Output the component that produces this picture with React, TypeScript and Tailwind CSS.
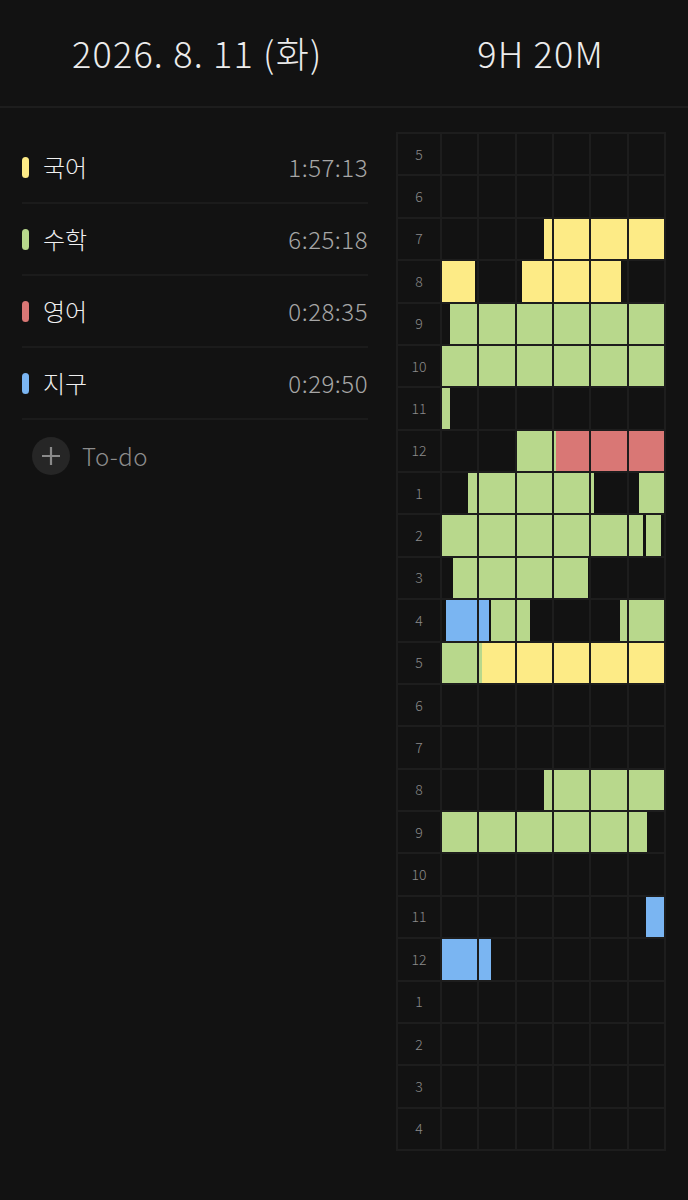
import React from 'react';

const Y = '#fdeb86';
const G = '#b8d88c';
const R = '#d97775';
const B = '#7ab5f2';

type Seg = [number, number, string];

const subjects = [
  { name: '국어', color: Y, time: '1:57:13' },
  { name: '수학', color: G, time: '6:25:18' },
  { name: '영어', color: R, time: '0:28:35' },
  { name: '지구', color: B, time: '0:29:50' },
];

const hours = [5, 6, 7, 8, 9, 10, 11, 12, 1, 2, 3, 4, 5, 6, 7, 8, 9, 10, 11, 12, 1, 2, 3, 4];

// minutes within each hour row
const rows: Seg[][] = [
  [],
  [],
  [[27.6, 60, Y]],
  [[0, 9.4, Y], [21.6, 48.5, Y]],
  [[2.2, 60, G]],
  [[0, 60, G]],
  [[0, 2.2, G]],
  [[20, 30.5, G], [30.5, 60, R]],
  [[7.3, 40.9, G], [52.9, 60, G]],
  [[0, 54.2, G], [55, 59.1, G]],
  [[3.2, 39.5, G]],
  [[1.1, 12.6, B], [13.3, 23.9, G], [48, 60, G]],
  [[0, 10.8, G], [10.8, 60, Y]],
  [],
  [],
  [[27.6, 60, G]],
  [[0, 55.2, G]],
  [],
  [[55, 60, B]],
  [[0, 13.3, B]],
  [],
  [],
  [],
  [],
];

const Cell = ({ segs, col }: { segs: Seg[]; col: number }) => {
  const from = col * 10;
  const to = from + 10;
  return (
    <div className="relative flex-1 border-l-2 border-[#1d1d1d]">
      {segs
        .filter(([a, b]) => b > from && a < to)
        .map(([a, b, c], i) => {
          const s = Math.max(a, from) - from;
          const e = Math.min(b, to) - from;
          return (
            <div
              key={i}
              className="absolute top-0 bottom-0"
              style={{ left: `${s * 10}%`, width: `${(e - s) * 10}%`, background: c }}
            />
          );
        })}
    </div>
  );
};

export default function App() {
  return (
    <div className="w-[688px] h-[1200px] bg-[#121212] text-[#ececec] font-['Noto_Sans_CJK_KR','Noto_Sans',sans-serif] overflow-hidden">
      <div className="h-[108px] flex items-center justify-between pl-[72px] pr-[84px] pb-[3px] border-b-2 border-[#1d1d1d]">
        <div className="text-[36px] font-light tracking-[1.2px]">2026. 8. 11 (화)</div>
        <div className="text-[36px] font-light tracking-[1.2px]">9H 20M</div>
      </div>

      <div className="flex pt-[24px] pl-[22px]">
        <div className="w-[346px]">
          {subjects.map((s) => (
            <div key={s.name} className="h-[72px] flex items-center border-b-2 border-[#1b1b1b]">
              <div className="w-[7px] h-[21px] rounded-full" style={{ background: s.color }} />
              <div className="ml-[14px] text-[24px] font-light text-[#f0f0f0]">{s.name}</div>
              <div className="ml-auto text-[24px] font-light tracking-[0.5px] text-[#a6a6a6]">{s.time}</div>
            </div>
          ))}
          <div className="h-[72px] flex items-center">
            <div className="ml-[10px] w-[38px] h-[38px] rounded-full bg-[#262626] flex items-center justify-center">
              <svg width="24" height="24" viewBox="0 0 24 24" fill="none" stroke="#8a8a8a" strokeWidth="2.2">
                <path d="M12 3v18M3 12h18" />
              </svg>
            </div>
            <div className="ml-[12px] text-[24px] font-light tracking-[0.5px] text-[#8c8c8c]">To-do</div>
          </div>
        </div>

        <div className="ml-[28px] w-[270px] h-[1019px] flex flex-col border-2 border-[#1d1d1d]">
          {hours.map((h, r) => (
            <div key={r} className="flex-1 flex border-b-2 border-[#1d1d1d] last:border-b-0">
              <div className="w-[42px] flex items-center justify-center text-[14px] font-light text-[#8a8a8a]">{h}</div>
              {[0, 1, 2, 3, 4, 5].map((c) => (
                <Cell key={c} segs={rows[r]} col={c} />
              ))}
            </div>
          ))}
        </div>
      </div>
    </div>
  );
}
